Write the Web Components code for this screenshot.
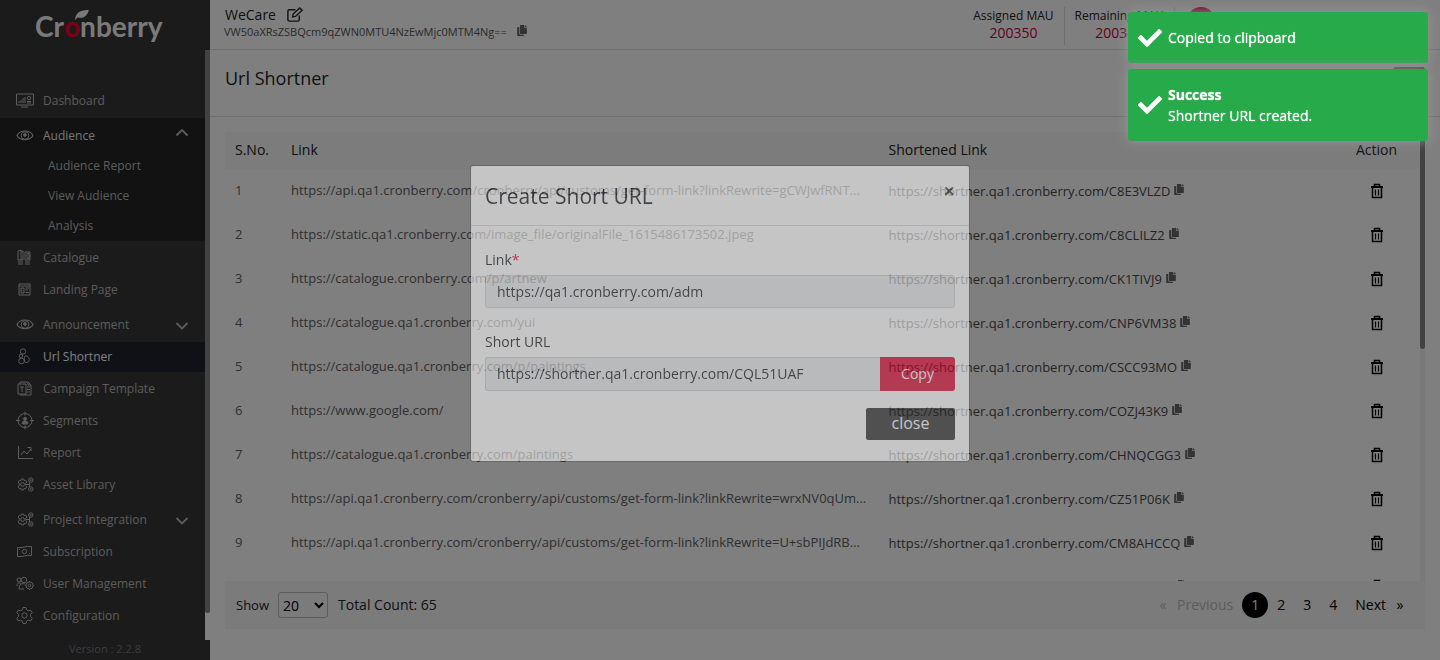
<!DOCTYPE html>
<html lang="en">
<head>
<meta charset="utf-8">
<title>Url Shortner</title>
<style>
html,body{margin:0;height:100%}
body{font-family:"Open Sans","Noto Sans",sans-serif;font-size:14px;line-height:20px;color:#212529;background:#fff;overflow:hidden}
</style>
</head>
<body>
<cb-app></cb-app>
<script>
const ICONS = {
  dashboard:'<path d="M1.500 3h17v11h-17zM6 16h7M4 12v-2M6 12V9M8 12V7M10 12V6"/><circle cx="14" cy="7" r="1.6"/><path d="M12 10.500h4M12 12h4"/>',
  eye:'<path d="M2 9.500C5 3.500 15 3.500 18 9.500C15 15 5 15 2 9.500z" stroke-width="1.200"/><circle cx="10" cy="9.500" r="3.800"/><circle cx="10" cy="9" r="1.400" fill="currentColor"/>',
  catalogue:'<path d="M3 3l3-1v10H3zM6 3h2v9H6M10 4h5v8h-5zM12 5.500v5h2v-5zM3 14h5M10 14h5M3 16h5M10 16h5"/>',
  landing:'<path d="M4 4h11v11H4zM4 6h11M6 8h3v5H6zM10.500 8H14M10.500 10H13M10.500 12.500H14M7 10v1"/>',
  url:'<circle cx="8" cy="4.500" r="2.700"/><circle cx="6" cy="9" r="1.800"/><circle cx="6.500" cy="14" r="2.800"/><path d="M10 9c5-1 6 7 1 6.500c-2 0-2-5-1-6.500z"/>',
  template:'<path d="M5 5V3h8l3 3v10H5M13 3v3h3M3 5h8v10H3zM5 8h4M7 8v5M12 8h3M12 10.500h3M12 13h3"/>',
  segments:'<circle cx="10" cy="9.500" r="7"/><path d="M10 .5v4M10 14.500v4M1 9.500h4M15 9.500h4"/><circle cx="10" cy="7.800" r="1.500" fill="currentColor"/><path d="M7.300 13v-2l2-1h1.400l2 1v2z" fill="currentColor"/>',
  report:'<path d="M3.500 3v12.500H18M6 12l3-4 3 3 4-5M12.500 4.500H16V8"/>',
  share:'<circle cx="7.500" cy="9.500" r="1.900"/><path d="M6.400 4h2.200l.5 1.700 1.500-.5 1.200 1.900-1 1.300v2.200l1 1.300-1.200 1.900-1.500-.5-.5 1.700H6.400l-.5-1.700-1.500.5-1.200-1.900 1-1.300V8.400l-1-1.300 1.200-1.900 1.500.5z"/><circle cx="15.800" cy="5" r="2.200"/><circle cx="15.800" cy="14" r="2.200"/><circle cx="15.800" cy="5" r=".5"/><circle cx="15.800" cy="14" r=".5"/><path d="M11 9.500h3M14.500 7v5"/>',
  money:'<path d="M2.500 5.500c5 1 8-2 14-1v9c-6-1-9 2-14 1z"/><circle cx="9.500" cy="9.500" r="2.200"/><path d="M4.500 7v1M14.500 11v1"/>',
  users:'<circle cx="4" cy="6" r="2"/><circle cx="9" cy="6" r="2.700"/><path d="M2 12c0-4 3-4 4-2M4 15c0-5 3-6 6-5M4 15h5"/><circle cx="14.500" cy="11.500" r="3.600"/><circle cx="14.500" cy="11.500" r="1.300"/><path d="M14.500 7v1M14.500 15v1M10 11.500h1M18 11.500h1"/>',
  gear:'<circle cx="9.500" cy="9.500" r="2.700"/><path d="M8 1.500h3l.6 2.300 1.800 1 2.300-.7 1.500 2.600-1.700 1.700v2.200l1.700 1.700-1.500 2.600-2.300-.7-1.800 1-.6 2.300H8l-.6-2.300-1.800-1-2.300.7-1.500-2.600 1.700-1.700V8.400L1.800 6.700l1.500-2.600 2.300.7 1.800-1z"/>',
  up:'<path d="M4.500 9.500l5.500-5.500 5.500 5.500" stroke-width="1.800"/>',
  down:'<path d="M4.500 8l5.500 5.500L15.500 8" stroke-width="1.800"/>',
  edit:'<path d="M10 4H3.500Q2 4 2 5.500v9Q2 16 3.500 16h9q1.500 0 1.500-1.500V10M7 11.500l.5-3L14.500 2l2.500 2.500L10 11z" stroke-width="1.500"/>',
  trash:'<path d="M1 4h12" stroke-width="2"/><path d="M4.500 3V1.500h5V3M2.500 4v10.500h9V4" stroke-width="1.500"/><path d="M5.500 6.500v6M8.500 6.500v6" stroke-width="1.200"/>'
};
const FA = {
  copy:['0 0 448 512','M320 448v40c0 13.255-10.745 24-24 24H24c-13.255 0-24-10.745-24-24V120c0-13.255 10.745-24 24-24h72v296c0 30.879 25.121 56 56 56h168zm0-344V0H152c-13.255 0-24 10.745-24 24v368c0 13.255 10.745 24 24 24h272c13.255 0 24-10.745 24-24V128H344c-13.200 0-24-10.800-24-24zm120.971-31.029L375.029 7.029A24 24 0 0 0 358.059 0H352v96h96v-6.059a24 24 0 0 0-7.029-16.970z'],
  check:['0 0 512 512','M173.898 439.404l-166.400-166.400c-9.997-9.997-9.997-26.206 0-36.204l36.203-36.204c9.997-9.998 26.207-9.998 36.204 0L192 312.690 432.095 72.596c9.997-9.997 26.207-9.997 36.204 0l36.203 36.204c9.997 9.997 9.997 26.206 0 36.204l-294.400 294.401c-9.998 9.997-26.207 9.997-36.204-.001z']
};
function icon(name){
  if (FA[name]) return `<svg class="i-${name}" viewBox="${FA[name][0]}" fill="currentColor" aria-hidden="true"><path d="${FA[name][1]}"/></svg>`;
  const box = name === 'trash' ? '0 0 14 16' : '0 0 19 19';
  return `<svg class="i-${name}" viewBox="${box}" fill="none" stroke="currentColor" stroke-width="1" aria-hidden="true">${ICONS[name]}</svg>`;
}
const RESET = '*{box-sizing:border-box}button,input,select{font:inherit;color:inherit}button{border:0;background:none;padding:0}a{color:inherit;text-decoration:none}svg{display:block;flex:none}';
function define(name, html){
  customElements.define(name, class extends HTMLElement {
    constructor(){
      super();
      const t = document.createElement('template');
      t.innerHTML = '<style>' + RESET + '</style>' + (typeof html === 'function' ? html(this) : html);
      this.attachShadow({mode:'open'}).append(t.content.cloneNode(true));
    }
  });
}

define('cb-logo', `<style>
:host{display:block;position:relative;font:700 28px/30px Lato,sans-serif;color:#f4f4f4}
b{font-weight:900;color:#f0002d}
svg{position:absolute;left:38px;top:-2px;width:17px;height:12px}
</style>Cr<b>o</b>nberry<svg viewBox="0 0 18 13" aria-hidden="true"><path d="M2 11C3 3 9 1 17 1C15 8 10 11 5 9L2 12z" fill="#f4f4f4"/></svg>`);

define('cb-menu-item', el => `<style>
:host{display:block;margin-bottom:2px;color:#b8b8b8}
:host([toggle]){margin-top:5px}
:host([open]){margin-top:0;padding-top:3px;background:#242424}
:host([open]) .row{color:#e8e8e8}
:host([active]){background:#1f222c;color:#fff}
.row{display:flex;align-items:center;height:30px;padding:0 14px 2px 15px;gap:9px}
.row span{padding-top:2px}
svg{width:19px;height:19px;color:#bbb}
svg:last-child{margin-left:auto}
::slotted([slot=sub]){display:block;height:30px;padding:5px 0 0 48px;line-height:20px}
</style><a class="row" href="#">${icon(el.getAttribute('icon'))}<span><slot></slot></span>${el.hasAttribute('toggle') ? icon(el.hasAttribute('open') ? 'up' : 'down') : ''}</a><slot name="sub"></slot>`);

define('cb-sidebar', `<style>
:host{display:flex;flex-direction:column;width:210px;flex:none;background:#363636;color:#b8b8b8;font-size:12px;line-height:20px}
header{height:50px;flex:none;padding:11px 0 0 35px;border-bottom:1px solid #323232}
.body{flex:1;display:flex;min-height:0}
nav{flex:1;padding-top:36px}
nav a{box-sizing:border-box;color:#b8b8b8;text-decoration:none}
.track{width:5px;background:#fff}
.thumb{height:95.4%;border-radius:0 0 3px 3px;background:#848484}
footer{height:20px;flex:none;text-align:center;font-size:11px;line-height:18px;color:#777}
</style>
<header><cb-logo></cb-logo></header>
<div class="body"><nav>
<cb-menu-item icon="dashboard">Dashboard</cb-menu-item>
<cb-menu-item icon="eye" toggle open>Audience<a slot="sub" href="#">Audience Report</a><a slot="sub" href="#">View Audience</a><a slot="sub" href="#">Analysis</a></cb-menu-item>
<cb-menu-item icon="catalogue">Catalogue</cb-menu-item>
<cb-menu-item icon="landing">Landing Page</cb-menu-item>
<cb-menu-item icon="eye" toggle>Announcement</cb-menu-item>
<cb-menu-item icon="url" active>Url Shortner</cb-menu-item>
<cb-menu-item icon="template">Campaign Template</cb-menu-item>
<cb-menu-item icon="segments">Segments</cb-menu-item>
<cb-menu-item icon="report">Report</cb-menu-item>
<cb-menu-item icon="share">Asset Library</cb-menu-item>
<cb-menu-item icon="share" toggle>Project Integration</cb-menu-item>
<cb-menu-item icon="money">Subscription</cb-menu-item>
<cb-menu-item icon="users">User Management</cb-menu-item>
<cb-menu-item icon="gear">Configuration</cb-menu-item>
</nav><div class="track"><div class="thumb"></div></div></div>
<footer>Version : 2.2.8</footer>`);

define('cb-topbar', `<style>
:host{display:flex;justify-content:space-between;height:50px;flex:none;padding:6px 15px 0 14px;border-bottom:1px solid #e0e0e0}
.name{display:flex;align-items:center;gap:10px;height:18px;color:#222;padding-left:1px}
.i-edit{width:18px;height:18px}
.key{display:flex;align-items:center;gap:10px;font-size:11px;line-height:16px;color:#555}
.key button{margin-top:-3px}
.i-copy{width:10px;height:11px;color:#666}
.right{display:flex;padding-right:210px}
.stat{text-align:center;padding:0 10px;height:38px;border-right:1px solid #ddd;font-size:12px;line-height:18px;margin-top:1px;color:#222}
.stat b{display:block;font-weight:400;font-size:14px;line-height:16px;color:#c3003c}
.avatar{width:28px;height:28px;border-radius:50%;background:#d9134a;margin:1px 0 0 12px}
</style>
<div><div class="name">WeCare <button aria-label="Edit project">${icon('edit')}</button></div>
<div class="key">VW50aXRsZSBQcm9qZWN0MTU4NzEwMjc0MTM4Ng== <button aria-label="Copy key">${icon('copy')}</button></div></div>
<div class="right"><div class="stat">Assigned MAU<b>200350</b></div><div class="stat">Remaining MAU<b>200340</b></div><button class="avatar" aria-label="Account"></button></div>`);

define('cb-titlebar', `<style>
:host{display:flex;justify-content:space-between;align-items:flex-start;height:67px;flex:none;padding:17px 15px 0;border-bottom:1px solid #e0e0e0}
h1{margin:0;font-size:18px;line-height:22px;font-weight:400}
button{width:32px;height:32px;border-radius:3px;background:#555}
</style><h1>Url Shortner</h1><button aria-label="Add short url"></button>`);

const ROWS = [
['https://api.qa1.cronberry.com/cronberry/api/customs/get-form-link?linkRewrite=gCWJwfRNT...','C8E3VLZD'],
['https://static.qa1.cronberry.com/image_file/originalFile_1615486173502.jpeg','C8CLILZ2'],
['https://catalogue.cronberry.com/p/artnew','CK1TIVJ9'],
['https://catalogue.qa1.cronberry.com/yui','CNP6VM38'],
['https://catalogue.qa1.cronberry.com/p/paintings','CSCC93MO'],
['https://www.google.com/','COZJ43K9'],
['https://catalogue.qa1.cronberry.com/paintings','CHNQCGG3'],
['https://api.qa1.cronberry.com/cronberry/api/customs/get-form-link?linkRewrite=wrxNV0qUm...','CZ51P06K'],
['https://api.qa1.cronberry.com/cronberry/api/customs/get-form-link?linkRewrite=U+sbPIJdRB...','CM8AHCCQ']
];
const trash = `<button class="del" aria-label="Delete">${icon('trash')}</button>`;
const copy = `<button class="cp" aria-label="Copy short link">${icon('copy')}</button>`;
define('cb-table', `<style>
:host{display:flex;flex:1;min-height:0;overflow:hidden}
.wrap{flex:1;min-width:0;overflow:hidden}
table{width:100%;border-collapse:collapse;table-layout:fixed}
th{height:37px;background:#f8f8f8;font-size:14px;font-weight:400;text-align:left;padding:0 10px 2px;color:#222}
td{height:44px;padding:0 10px;font-size:13px;color:#606060;white-space:nowrap}
td:nth-child(-n+2){padding-bottom:2px}
td:nth-child(3){color:#484848}
th:nth-child(1){width:56px}th:nth-child(2){width:50%}th:nth-child(4){width:87px;padding:0 0 2px;text-align:center}
td:nth-child(4){padding:0}
td:nth-child(4) button{margin:0 auto}
button{display:block}
.short{display:flex;gap:4px;align-items:center}
.cp{margin-top:-4px}
.i-copy{width:10px;height:11px;color:#666}
.i-trash{width:14px;height:16px;color:#000}
.next .short{padding-left:286px}
.track{width:5px;background:#f2f2f2}
.thumb{height:217px;border-radius:3px;background:#848484}
</style>
<div class="wrap"><table><thead><tr><th>S.No.</th><th>Link</th><th>Shortened Link</th><th>Action</th></tr></thead><tbody>
${ROWS.map((r,i)=>`<tr><td>${i+1}</td><td>${r[0]}</td><td><div class="short">https://shortner.qa1.cronberry.com/${r[1]}${copy}</div></td><td>${trash}</td></tr>`).join('')}
<tr class="next"><td></td><td></td><td><div class="short">${copy}</div></td><td>${trash}</td></tr>
</tbody></table></div><div class="track"><div class="thumb"></div></div>`);

define('cb-pager', `<style>
:host{display:flex;align-items:center;justify-content:space-between;height:48px;flex:none;padding:0 20px 0 11px;background:#f6f6f6}
div,nav{display:flex;align-items:center}
label{font-size:13px}
select{width:50px;height:26px;margin:0 10px 0 9px;border:1px solid #bbb;border-radius:3px;background:transparent;padding:0;color:#000}
a{color:#000;min-width:26px;line-height:26px;text-align:center}
a.off{color:#bbb}
a.on{background:#000;color:#fff;border-radius:50%}
.word{padding:0 9px}
.edge{min-width:10px}
</style>
<div><label for="n">Show</label><select id="n"><option>20</option></select><span>Total Count: 65</span></div>
<nav aria-label="Pages"><a class="off edge" href="#">«</a><a class="off word" href="#">Previous</a><a class="on" href="#">1</a><a href="#">2</a><a href="#">3</a><a href="#">4</a><a class="word" href="#">Next</a><a class="edge" href="#">»</a></nav>`);

define('cb-modal', `<style>
:host{position:fixed;inset:0;display:block;padding-top:165px}
section{width:500px;max-width:100%;margin:0 auto;background:#fff;background-clip:padding-box;border:1px solid rgba(0,0,0,.3);border-radius:3px;opacity:.55}
header{display:flex;justify-content:space-between;align-items:center;height:60px;padding:0 14px;border-bottom:1px solid #d8d8d8}
h2{margin:0;font-size:21px;line-height:28px;font-weight:400;color:#111418}
header button{font-size:20px;line-height:20px;font-weight:700;padding-bottom:10px;color:#444}
form{padding:24px 14px 21px;display:flex;flex-direction:column;color:#111418}
label{line-height:20px;margin-bottom:5px}
label span{color:#e4002b}
input{display:block;width:100%;min-width:0;height:33px;padding:0 11px;border:1px solid #ccc;border-radius:3px;background:#e9ecef;color:#111418}
.group{display:flex;margin-bottom:17px;height:34px}
.group input{flex:1;height:34px;padding-bottom:2px;border-radius:3px 0 0 3px;border-right:0}
.group button{width:75px;background:#e0002f;color:#fff;border-radius:0 3px 3px 0}
.link{margin-bottom:24px}
.close{align-self:flex-end;width:89px;height:32px;padding-bottom:2px;font-size:16px;background:#2a2a2d;color:#fff;border-radius:2px}
</style>
<section role="dialog" aria-label="Create Short URL"><header><h2>Create Short URL</h2><button aria-label="Dismiss">×</button></header>
<form><label for="l">Link<span>*</span></label><input id="l" class="link" readonly value="https://qa1.cronberry.com/adm">
<label for="s">Short URL</label><div class="group"><input id="s" readonly value="https://shortner.qa1.cronberry.com/CQL51UAF"><button type="button">Copy</button></div>
<button type="button" class="close">close</button></form></section>`);

define('cb-toast', `<style>
:host{display:flex;align-items:center;gap:6px;width:300px;padding:15px 10px;border-radius:3px;background:#27aa4a;color:#fff;box-shadow:0 0 12px #999;line-height:21px;text-shadow:0 0 1px #fff}
:host([tall]){min-height:72px}
.i-check{width:24px;height:24px;margin:-2px 0}
::slotted(b){display:block}
</style>${icon('check')}<div><slot></slot></div>`);

define('cb-app', `<style>
:host{display:flex;height:100vh}
main{flex:1;min-width:0;display:flex;flex-direction:column}
.card{flex:1;min-height:0;display:flex;flex-direction:column;margin:15px 15px 31px}
.shade{position:fixed;inset:0;background:rgba(0,0,0,.5)}
.toasts{position:fixed;top:12px;right:12px;display:flex;flex-direction:column;gap:6px}
</style>
<cb-sidebar></cb-sidebar>
<main><cb-topbar></cb-topbar><cb-titlebar></cb-titlebar><div class="card"><cb-table></cb-table><cb-pager></cb-pager></div></main>
<div class="shade"></div>
<cb-modal></cb-modal>
<div class="toasts"><cb-toast>Copied to clipboard</cb-toast><cb-toast tall><b>Success</b>Shortner URL created.</cb-toast></div>`);
</script>
</body>
</html>
